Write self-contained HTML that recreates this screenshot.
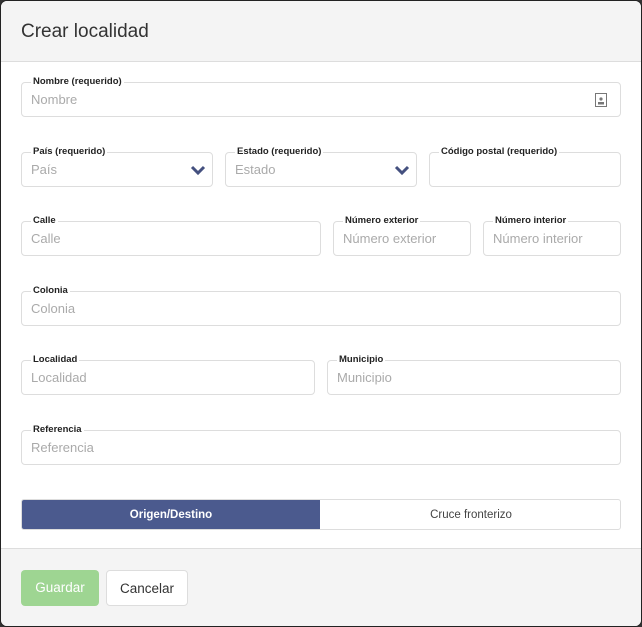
<!DOCTYPE html>
<html><head><meta charset="utf-8"><style>
*{box-sizing:border-box;margin:0;padding:0}
body{width:642px;height:627px;background:#333;font-family:"Liberation Sans",sans-serif;position:relative;overflow:hidden}
.modal{position:absolute;left:0;top:0;width:642px;height:627px;background:#fff;border:1px solid #222;border-radius:7px;overflow:hidden}
.in{position:absolute;left:-1px;top:-1px;width:642px;height:627px}
.hdr{position:absolute;left:0;top:0;width:100%;height:62px;background:#f4f4f4;border-bottom:1px solid #ddd}
.hdr h1{position:absolute;left:21px;top:21px;font-size:19px;font-weight:normal;color:#333}
.ftr{position:absolute;left:0;top:548px;width:100%;height:80px;background:#f4f4f4;border-top:1px solid #ddd}
.f{position:absolute;border:1px solid #ddd;border-radius:4px;height:35px}
.f .l{position:absolute;left:9px;top:-8px;background:#fff;padding:0 2px;font-size:9.5px;font-weight:bold;color:#222;line-height:14px;white-space:nowrap}
.f .p{position:absolute;left:9px;top:9px;font-size:13px;color:#aaa;white-space:nowrap}
.chev{position:absolute;right:6px;top:11px}
.tabs{position:absolute;left:21px;top:499px;width:600px;height:31px;border:1px solid #ddd;border-radius:3px;overflow:hidden}
.t1{position:absolute;left:0;top:0;width:298px;height:31px;background:#4b5a8e;color:#fff;font-size:11.5px;font-weight:bold;text-align:center;line-height:30px}
.t2{position:absolute;left:298px;top:0;width:302px;height:31px;color:#444;font-size:11.5px;text-align:center;line-height:30px}
.b{position:absolute;top:570px;height:36px;border-radius:4px;font-size:13.5px;text-align:center;line-height:35px}
</style></head><body>
<div class="modal"><div class="in">
<div class="hdr"><h1>Crear localidad</h1></div>

<div class="f" style="left:21px;top:82px;width:600px"><span class="l">Nombre (requerido)</span><span class="p">Nombre</span>
<svg style="position:absolute;right:13px;top:10px" width="12" height="14" viewBox="0 0 12 14"><rect x="0.5" y="0.5" width="11" height="13" fill="#fff" stroke="#777"/><circle cx="6" cy="6" r="1.6" fill="#777"/><rect x="3" y="9" width="6" height="2.5" fill="#777"/></svg></div>

<div class="f" style="left:21px;top:152px;width:192px"><span class="l">País (requerido)</span><span class="p">País</span>
<svg class="chev" width="16" height="12" viewBox="0 0 16 12"><path d="M2 3 L8 9 L14 3" stroke="#44507f" stroke-width="3" fill="none"/></svg></div>
<div class="f" style="left:225px;top:152px;width:192px"><span class="l">Estado (requerido)</span><span class="p">Estado</span>
<svg class="chev" width="16" height="12" viewBox="0 0 16 12"><path d="M2 3 L8 9 L14 3" stroke="#44507f" stroke-width="3" fill="none"/></svg></div>
<div class="f" style="left:429px;top:152px;width:192px"><span class="l">Código postal (requerido)</span></div>

<div class="f" style="left:21px;top:221px;width:300px"><span class="l">Calle</span><span class="p">Calle</span></div>
<div class="f" style="left:333px;top:221px;width:138px"><span class="l">Número exterior</span><span class="p">Número exterior</span></div>
<div class="f" style="left:483px;top:221px;width:138px"><span class="l">Número interior</span><span class="p">Número interior</span></div>

<div class="f" style="left:21px;top:291px;width:600px"><span class="l">Colonia</span><span class="p">Colonia</span></div>

<div class="f" style="left:21px;top:360px;width:294px"><span class="l">Localidad</span><span class="p">Localidad</span></div>
<div class="f" style="left:327px;top:360px;width:294px"><span class="l">Municipio</span><span class="p">Municipio</span></div>

<div class="f" style="left:21px;top:430px;width:600px"><span class="l">Referencia</span><span class="p">Referencia</span></div>

<div class="tabs"><div class="t1">Origen/Destino</div><div class="t2">Cruce fronterizo</div></div>

<div class="ftr"></div>
<div class="b" style="left:21px;width:78px;background:#9ed592;color:#fff">Guardar</div>
<div class="b" style="left:106px;width:82px;background:#fff;border:1px solid #ddd;color:#333">Cancelar</div>
</div></div>
</body></html>
